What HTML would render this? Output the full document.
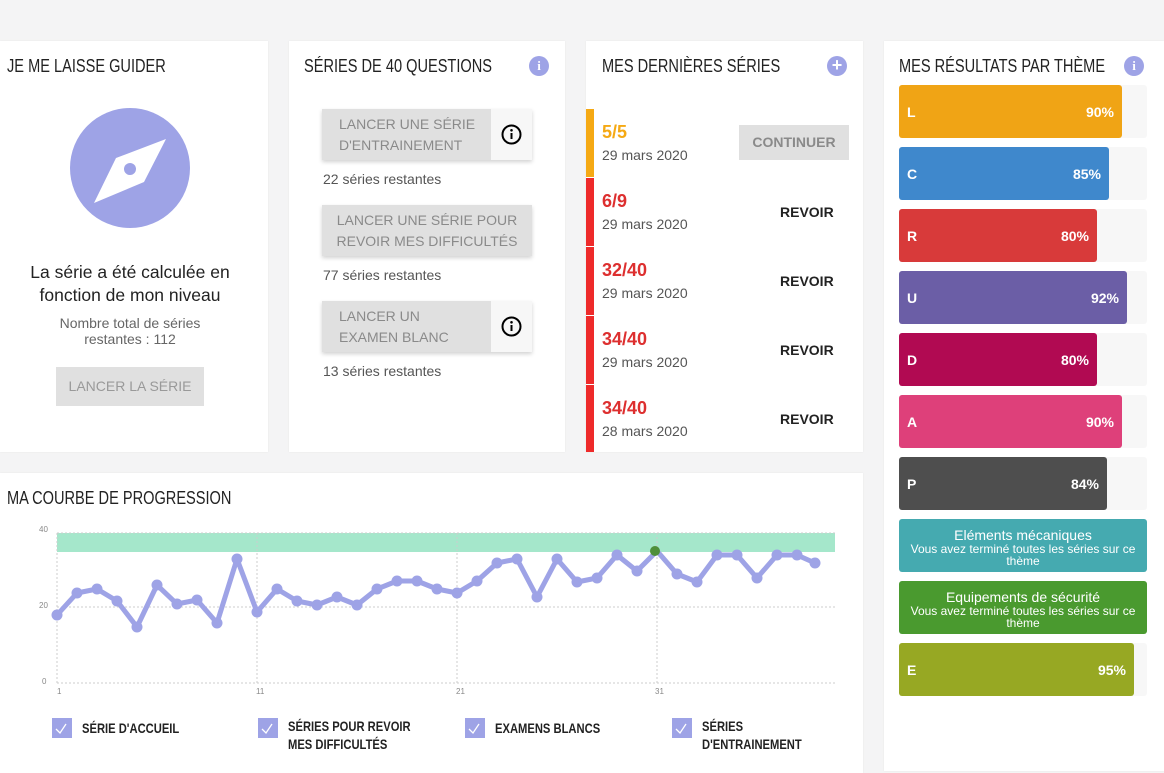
<!DOCTYPE html>
<html><head><meta charset="utf-8">
<style>
*{box-sizing:border-box;margin:0;padding:0}
body{width:1164px;height:764px;background:#f4f4f5;font-family:"Liberation Sans",sans-serif;position:relative;overflow:hidden;color:#222}
.card{position:absolute;background:#fff;box-shadow:0 0 2px rgba(0,0,0,.06)}
.h{position:absolute;font-size:18px;color:#222;white-space:nowrap;transform:scaleX(.81);transform-origin:left top}
.abs{position:absolute}
.info{position:absolute;width:20px;height:20px;border-radius:50%;background:#9ea3e6;color:#fff;font-weight:bold;font-size:13px;text-align:center;line-height:20px;font-family:"Liberation Serif",serif}
.btn{position:absolute;background:#e0e0e0;color:#8a8a8a;font-size:14px;line-height:21px;box-shadow:0 2px 4px rgba(0,0,0,.18)}
.btn .ib{position:absolute;right:0;top:0;bottom:0;width:41px;background:#f7f7f7}
.rest{position:absolute;font-size:14px;color:#555}
.row{position:absolute;left:0;width:277px;height:68px}
.row .bar{position:absolute;left:0;top:0;width:8px;height:100%}
.row .sc{position:absolute;left:16px;top:13px;font-size:18px;font-weight:bold}
.row .dt{position:absolute;left:16px;top:38px;font-size:14px;color:#555}
.row .rv{position:absolute;left:194px;top:26px;font-size:14px;font-weight:bold;color:#222}
.tb{position:absolute;left:15px;width:248px;height:53px;background:#f7f7f7;border-radius:3px}
.tb div{position:absolute;left:0;top:0;height:53px;border-radius:3px;color:#fff;font-weight:bold;font-size:14px}
.tb span{position:absolute;left:8px;top:19px}
.tb b{position:absolute;right:8px;top:19px}
.msg{position:absolute;left:15px;width:248px;height:53px;border-radius:3px;color:#fff;text-align:center;font-size:12px;line-height:12px;padding-top:9px}
.msg .t{font-size:14px;line-height:15px}
.cb{position:absolute;width:20px;height:20px;background:#9ea3e6}
.lg{position:absolute;font-size:14px;font-weight:bold;color:#222;line-height:18px;transform:scaleX(.8);transform-origin:left top;white-space:nowrap}
</style></head><body>

<div class="card" style="left:0;top:41px;width:268px;height:411px">
 <div class="h" style="left:7px;top:15px">JE ME LAISSE GUIDER</div>
 <svg class="abs" style="left:70px;top:67px" width="120" height="120" viewBox="0 0 120 120">
  <circle cx="60" cy="60" r="60" fill="#9ea3e6"/>
  <path d="M96 31 L74 74 L24 95 L46 50 Z" fill="#fff"/>
  <circle cx="60" cy="61" r="6" fill="#9ea3e6"/>
 </svg>
 <div class="abs" style="left:0;width:260px;top:220px;text-align:center;font-size:17.5px;line-height:23px;color:#222">La série a été calculée en<br>fonction de mon niveau</div>
 <div class="abs" style="left:0;width:260px;top:274px;text-align:center;font-size:14px;line-height:16px;color:#666">Nombre total de séries<br>restantes : 112</div>
 <div class="abs" style="left:56px;top:326px;width:148px;height:39px;background:#e0e0e0;color:#999;font-size:14px;text-align:center;line-height:39px">LANCER LA SÉRIE</div>
</div>

<div class="card" style="left:289px;top:41px;width:276px;height:411px">
 <div class="h" style="left:15px;top:15px">SÉRIES DE 40 QUESTIONS</div>
 <div class="info" style="left:240px;top:15px">i</div>
 <div class="btn" style="left:33px;top:68px;width:210px;height:51px;padding:5px 0 0 17px">LANCER UNE SÉRIE<br>D'ENTRAINEMENT<div class="ib"><svg style="position:absolute;left:10px;top:15px" width="21" height="21" viewBox="0 0 21 21"><circle cx="10.5" cy="10.5" r="9" fill="none" stroke="#000" stroke-width="2"/><rect x="9.5" y="9" width="2" height="6" fill="#000"/><circle cx="10.5" cy="6.3" r="1.3" fill="#000"/></svg></div></div>
 <div class="rest" style="left:34px;top:130px">22 séries restantes</div>
 <div class="btn" style="left:33px;top:164px;width:210px;height:51px;padding-top:5px;text-align:center">LANCER UNE SÉRIE POUR<br>REVOIR MES DIFFICULTÉS</div>
 <div class="rest" style="left:34px;top:226px">77 séries restantes</div>
 <div class="btn" style="left:33px;top:260px;width:210px;height:51px;padding:5px 0 0 17px">LANCER UN<br>EXAMEN BLANC<div class="ib"><svg style="position:absolute;left:10px;top:15px" width="21" height="21" viewBox="0 0 21 21"><circle cx="10.5" cy="10.5" r="9" fill="none" stroke="#000" stroke-width="2"/><rect x="9.5" y="9" width="2" height="6" fill="#000"/><circle cx="10.5" cy="6.3" r="1.3" fill="#000"/></svg></div></div>
 <div class="rest" style="left:34px;top:322px">13 séries restantes</div>
</div>

<div class="card" style="left:586px;top:41px;width:277px;height:411px">
 <div class="h" style="left:16px;top:15px">MES DERNIÈRES SÉRIES</div>
 <div class="info" style="left:241px;top:15px;font-family:'Liberation Sans',sans-serif;font-size:18px;line-height:19px">+</div>
 <div class="row" style="top:68px"><div class="bar" style="background:#f5a914"></div><div class="sc" style="color:#f5a914">5/5</div><div class="dt">29 mars 2020</div>
  <div class="abs" style="left:153px;top:16px;width:110px;height:35px;background:#e0e0e0;color:#8a8a8a;font-size:14px;font-weight:bold;text-align:center;line-height:35px">CONTINUER</div></div>
 <div class="row" style="top:137px"><div class="bar" style="background:#ee2a2a"></div><div class="sc" style="color:#dd2f2f">6/9</div><div class="dt">29 mars 2020</div><div class="rv">REVOIR</div></div>
 <div class="row" style="top:206px"><div class="bar" style="background:#ee2a2a"></div><div class="sc" style="color:#dd2f2f">32/40</div><div class="dt">29 mars 2020</div><div class="rv">REVOIR</div></div>
 <div class="row" style="top:275px"><div class="bar" style="background:#ee2a2a"></div><div class="sc" style="color:#dd2f2f">34/40</div><div class="dt">29 mars 2020</div><div class="rv">REVOIR</div></div>
 <div class="row" style="top:344px;height:67px"><div class="bar" style="background:#ee2a2a"></div><div class="sc" style="color:#dd2f2f">34/40</div><div class="dt">28 mars 2020</div><div class="rv">REVOIR</div></div>
</div>

<div class="card" style="left:884px;top:41px;width:280px;height:730px">
 <div class="h" style="left:15px;top:15px">MES RÉSULTATS PAR THÈME</div>
 <div class="info" style="left:240px;top:15px">i</div>
 <div class="tb" style="top:44px"><div style="width:223px;background:#f0a415"><span>L</span><b>90%</b></div></div>
 <div class="tb" style="top:106px"><div style="width:210px;background:#3f88cc"><span>C</span><b>85%</b></div></div>
 <div class="tb" style="top:168px"><div style="width:198px;background:#d83a3a"><span>R</span><b>80%</b></div></div>
 <div class="tb" style="top:230px"><div style="width:228px;background:#6b5ea6"><span>U</span><b>92%</b></div></div>
 <div class="tb" style="top:292px"><div style="width:198px;background:#b10a52"><span>D</span><b>80%</b></div></div>
 <div class="tb" style="top:354px"><div style="width:223px;background:#de407a"><span>A</span><b>90%</b></div></div>
 <div class="tb" style="top:416px"><div style="width:208px;background:#4e4e4e"><span>P</span><b>84%</b></div></div>
 <div class="msg" style="top:478px;background:#45aab0"><div class="t">Eléments mécaniques</div>Vous avez terminé toutes les séries sur ce thème</div>
 <div class="msg" style="top:540px;background:#4a9a2f"><div class="t">Equipements de sécurité</div>Vous avez terminé toutes les séries sur ce thème</div>
 <div class="tb" style="top:602px"><div style="width:235px;background:#97a823"><span>E</span><b>95%</b></div></div>
</div>

<div class="card" style="left:0;top:473px;width:863px;height:300px">
 <div class="h" style="left:7px;top:15px">MA COURBE DE PROGRESSION</div>
</div>
<svg class="abs" style="left:0;top:0" width="864" height="764">
 <g font-family="Liberation Sans,sans-serif" font-size="8" fill="#888">
  <text x="39" y="532">40</text><text x="39" y="608">20</text><text x="42" y="684">0</text>
  <text x="57" y="694">1</text><text x="256" y="694">11</text><text x="456" y="694">21</text><text x="655" y="694">31</text>
 </g>
 <rect x="57" y="533" width="778" height="19" fill="#a5e7cb"/>
 <g stroke="#ccc" stroke-width="1" stroke-dasharray="2,2" fill="none">
  <line x1="57" y1="533" x2="835" y2="533"/><line x1="57" y1="607" x2="835" y2="607"/><line x1="57" y1="683" x2="835" y2="683"/>
  <line x1="57" y1="533" x2="57" y2="683"/><line x1="257" y1="533" x2="257" y2="683"/><line x1="457" y1="533" x2="457" y2="683"/><line x1="657" y1="533" x2="657" y2="683"/>
 </g>
 <polyline fill="none" stroke="#9ea3e6" stroke-width="5" stroke-linejoin="round" points="57,615 77,593 97,589 117,601 137,627 157,585 177,604 197,600 217,623 237,559 257,612 277,589 297,601 317,605 337,597 357,605 377,589 397,581 417,581 437,589 457,593 477,581 497,563 517,559 537,597 557,559 577,582 597,578 617,555 637,571 657,551 677,574 697,582 717,555 737,555 757,578 777,555 797,555 815,563"/>
 <g fill="#9ea3e6">
  <circle cx="57" cy="615" r="5.5"/><circle cx="77" cy="593" r="5.5"/><circle cx="97" cy="589" r="5.5"/><circle cx="117" cy="601" r="5.5"/><circle cx="137" cy="627" r="5.5"/><circle cx="157" cy="585" r="5.5"/><circle cx="177" cy="604" r="5.5"/><circle cx="197" cy="600" r="5.5"/><circle cx="217" cy="623" r="5.5"/><circle cx="237" cy="559" r="5.5"/><circle cx="257" cy="612" r="5.5"/><circle cx="277" cy="589" r="5.5"/><circle cx="297" cy="601" r="5.5"/><circle cx="317" cy="605" r="5.5"/><circle cx="337" cy="597" r="5.5"/><circle cx="357" cy="605" r="5.5"/><circle cx="377" cy="589" r="5.5"/><circle cx="397" cy="581" r="5.5"/><circle cx="417" cy="581" r="5.5"/><circle cx="437" cy="589" r="5.5"/><circle cx="457" cy="593" r="5.5"/><circle cx="477" cy="581" r="5.5"/><circle cx="497" cy="563" r="5.5"/><circle cx="517" cy="559" r="5.5"/><circle cx="537" cy="597" r="5.5"/><circle cx="557" cy="559" r="5.5"/><circle cx="577" cy="582" r="5.5"/><circle cx="597" cy="578" r="5.5"/><circle cx="617" cy="555" r="5.5"/><circle cx="637" cy="571" r="5.5"/><circle cx="677" cy="574" r="5.5"/><circle cx="697" cy="582" r="5.5"/><circle cx="717" cy="555" r="5.5"/><circle cx="737" cy="555" r="5.5"/><circle cx="757" cy="578" r="5.5"/><circle cx="777" cy="555" r="5.5"/><circle cx="797" cy="555" r="5.5"/><circle cx="815" cy="563" r="5.5"/>
 </g>
 <circle cx="655" cy="551" r="5" fill="#4f8f3a"/>
</svg>
<div class="cb" style="left:52px;top:718px"></div>
<div class="cb" style="left:258px;top:718px"></div>
<div class="cb" style="left:465px;top:718px"></div>
<div class="cb" style="left:672px;top:718px"></div>
<svg class="abs" style="left:0;top:0" width="864" height="764">
 <g fill="none" stroke="#fff" stroke-width="1.3">
  <path d="M56 729 l4 4 l6 -9"/><path d="M262 729 l4 4 l6 -9"/><path d="M469 729 l4 4 l6 -9"/><path d="M676 729 l4 4 l6 -9"/>
 </g>
</svg>
<div class="lg" style="left:82px;top:719px">SÉRIE D'ACCUEIL</div>
<div class="lg" style="left:288px;top:717px">SÉRIES POUR REVOIR<br>MES DIFFICULTÉS</div>
<div class="lg" style="left:495px;top:719px">EXAMENS BLANCS</div>
<div class="lg" style="left:702px;top:717px">SÉRIES<br>D'ENTRAINEMENT</div>
</body></html>
